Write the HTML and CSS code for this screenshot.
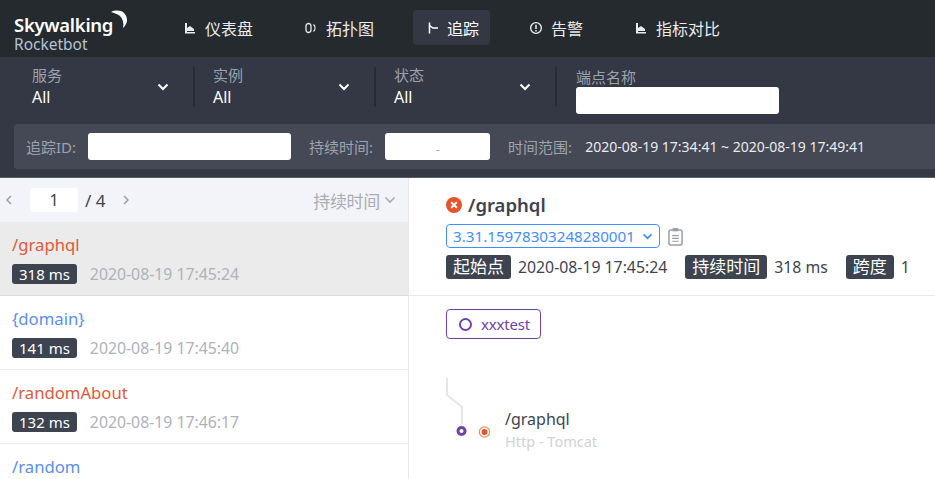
FILE: index.html
```html
<!DOCTYPE html>
<html>
  <head>
    <meta charset="UTF-8"/>
    <title>Skywalking Rocketbot</title>
    <link rel="stylesheet" href="styles.css">
  </head>
  <body>
    <header class="topbar">
      <div class="logo">
        <div class="logo-name">Skywalking<svg class="logo-moon" viewBox="0 0 17 20" width="17" height="20"><path d="M0 2 C4 0 10 0 13 3 C16 6 17 11 15 14 C14 16 13 17 12 18 C13 13 12 9 9 6 C7 4 3 3 0 2 Z" fill="#fff"/></svg></div>
        <div class="logo-sub">Rocketbot</div>
      </div>
      <nav class="nav">
        <a class="nav-item nav-first"><svg class="nav-icon" viewBox="0 0 12 12"><path d="M1 1 H3 V6 L6 4 L10 7 V9 H3 V10 H11 V11.5 H1 Z" fill="currentColor"/></svg>仪表盘</a>
        <a class="nav-item nav-topo"><svg class="nav-icon" viewBox="0 0 12 12"><rect x="1" y="1.5" width="5" height="9" rx="2.4" fill="none" stroke="currentColor" stroke-width="1.3"/><path d="M8.5 2.5 C10.5 4.5 10.5 7.5 8.5 9.5" fill="none" stroke="currentColor" stroke-width="1.3"/></svg>拓扑图</a>
        <a class="nav-item nav-trace active"><svg class="nav-icon" viewBox="0 0 12 12"><path d="M2.5 .5 V11.5 M2.5 3.5 L6 6 H11" fill="none" stroke="currentColor" stroke-width="1.5"/></svg>追踪</a>
        <a class="nav-item nav-alarm"><svg class="nav-icon" viewBox="0 0 12 12"><circle cx="6" cy="6" r="4.6" fill="none" stroke="currentColor" stroke-width="1.2"/><path d="M6 3.2 V6.8 M6 7.8 V9" stroke="currentColor" stroke-width="1.3"/></svg>告警</a>
        <a class="nav-item"><svg class="nav-icon" viewBox="0 0 12 12"><path d="M1 1 H3 V6 L6 4 L10 7 V9 H3 V10 H11 V11.5 H1 Z" fill="currentColor"/></svg>指标对比</a>
      </nav>
    </header>

    <section class="filters">
      <div class="filter-row">
        <div class="filter">
          <div class="filter-text"><span class="filter-label">服务</span><span class="filter-value">All</span></div>
          <svg class="chevron" viewBox="0 0 12 8" width="12" height="8"><path d="M1.5 1.5 L6 6 L10.5 1.5" fill="none" stroke="#fff" stroke-width="2"/></svg>
        </div>
        <div class="filter">
          <div class="filter-text"><span class="filter-label">实例</span><span class="filter-value">All</span></div>
          <svg class="chevron" viewBox="0 0 12 8" width="12" height="8"><path d="M1.5 1.5 L6 6 L10.5 1.5" fill="none" stroke="#fff" stroke-width="2"/></svg>
        </div>
        <div class="filter">
          <div class="filter-text"><span class="filter-label">状态</span><span class="filter-value">All</span></div>
          <svg class="chevron" viewBox="0 0 12 8" width="12" height="8"><path d="M1.5 1.5 L6 6 L10.5 1.5" fill="none" stroke="#fff" stroke-width="2"/></svg>
        </div>
        <div class="filter filter-endpoint">
          <span class="filter-label">端点名称</span>
          <input class="field field-endpoint" type="text">
        </div>
      </div>
      <div class="search-row">
        <span class="search-label">追踪ID:</span>
        <input class="field field-id" type="text">
        <span class="search-label label-duration">持续时间:</span>
        <div class="field field-duration">-</div>
        <span class="search-label label-range">时间范围:</span>
        <span class="range">2020-08-19 17:34:41 ~ 2020-08-19 17:49:41</span>
      </div>
    </section>

    <main class="content">
      <aside class="trace-list">
        <div class="pager">
          <svg class="pager-arrow" viewBox="0 0 8 12" width="8" height="12"><path d="M6 2 L2 6 L6 10" fill="none" stroke="#9aa0a8" stroke-width="1.5"/></svg>
          <div class="page-input">1</div>
          <span class="page-total">/ 4</span>
          <svg class="pager-arrow" viewBox="0 0 8 12" width="8" height="12"><path d="M2 2 L6 6 L2 10" fill="none" stroke="#9aa0a8" stroke-width="1.5"/></svg>
          <span class="sort">持续时间<svg viewBox="0 0 12 8" width="12" height="8"><path d="M1.5 1.5 L6 6 L10.5 1.5" fill="none" stroke="#a9adb3" stroke-width="1.6"/></svg></span>
        </div>
        <div class="trace selected">
          <div class="trace-name error">/graphql</div>
          <div class="trace-meta"><span class="tag">318 ms</span><span class="trace-time">2020-08-19 17:45:24</span></div>
        </div>
        <div class="trace">
          <div class="trace-name ok">{domain}</div>
          <div class="trace-meta"><span class="tag">141 ms</span><span class="trace-time">2020-08-19 17:45:40</span></div>
        </div>
        <div class="trace">
          <div class="trace-name error">/randomAbout</div>
          <div class="trace-meta"><span class="tag">132 ms</span><span class="trace-time">2020-08-19 17:46:17</span></div>
        </div>
        <div class="trace">
          <div class="trace-name ok">/random</div>
        </div>
      </aside>

      <section class="detail">
        <div class="detail-head">
          <h2 class="detail-title"><svg viewBox="0 0 16 16" width="16" height="16"><circle cx="8" cy="8" r="8" fill="#e5542b"/><path d="M5.2 5.2 L10.8 10.8 M10.8 5.2 L5.2 10.8" stroke="#fff" stroke-width="2"/></svg>/graphql</h2>
          <div class="id-row">
            <div class="id-select">3.31.15978303248280001<svg viewBox="0 0 12 8" width="11" height="7"><path d="M1.5 1.5 L6 6 L10.5 1.5" fill="none" stroke="#448dfe" stroke-width="2"/></svg></div>
            <svg class="clip" viewBox="0 0 16 20" width="15" height="19"><rect x="1" y="3" width="14" height="16" rx="2" fill="none" stroke="#9a9fa5" stroke-width="1.6"/><rect x="5" y="1" width="6" height="3.5" fill="#9a9fa5"/><path d="M4.5 9 H11.5 M4.5 12 H11.5 M4.5 15 H11.5" stroke="#9a9fa5" stroke-width="1.2"/></svg>
          </div>
          <div class="info-row">
            <span class="tag tag-cjk">起始点</span><span class="info-value">2020-08-19 17:45:24</span>
            <span class="tag tag-cjk">持续时间</span><span class="info-value">318 ms</span>
            <span class="tag tag-cjk">跨度</span><span class="info-value">1</span>
          </div>
        </div>
        <div class="detail-body">
          <div class="service-tag"><span class="service-dot"></span>xxxtest</div>
          <div class="span-row">
            <svg class="span-tree" viewBox="0 0 50 64" width="50" height="64">
              <path d="M1 1 V18 L16 30 V47" fill="none" stroke="#e6e6e6" stroke-width="2"/>
              <circle cx="15.5" cy="54" r="3.5" fill="#fff" stroke="#6f42a8" stroke-width="3"/>
              <circle cx="38.5" cy="55" r="5.2" fill="#fff" stroke="#ee8a66" stroke-width="1.2"/>
              <circle cx="38.5" cy="55" r="3" fill="#e5542b"/>
            </svg>
            <div class="span-text">
              <div class="span-name">/graphql</div>
              <div class="span-type">Http - Tomcat</div>
            </div>
          </div>
        </div>
      </section>
    </main>
  </body>
</html>
```

FILE: styles.css
```css
html, body { padding: 0; margin: 0; }
body {
    width: 935px;
    height: 479px;
    overflow: hidden;
    background: #fff;
    font-family: "Noto Sans", "Noto Sans CJK SC", sans-serif;
    font-size: 14px;
    color: #3d444f;
}

/* top bar */
.topbar {
    display: flex;
    height: 57px;
    background: #252a2f;
    color: #e9ebee;
}
.logo { box-sizing: border-box; width: 170px; padding: 13px 0 0 14px; }
.logo-name {
    display: flex;
    height: 23px;
    font-size: 18.5px;
    line-height: 23px;
    font-weight: 600;
    letter-spacing: -.3px;
    color: #fff;
}
.logo-moon { margin: -3px 0 0 -2px; }
.logo-sub { font-size: 15.5px; line-height: 17px; color: #b4c2d6; }
.nav { display: flex; padding-top: 10px; }
.nav-item {
    display: flex;
    align-items: center;
    height: 35px;
    padding: 0 13px;
    border-radius: 4px;
    font-size: 16px;
}
.nav-icon { width: 12px; height: 12px; margin-right: 9px; }
.nav-first { margin-left: 1px; }
.nav-topo { margin-left: 26px; }
.nav-trace { margin-left: 26px; padding: 0 11px 0 14px; }
.nav-trace .nav-icon { margin-right: 8px; }
.nav-alarm { margin-left: 26px; }
.nav-alarm .nav-icon { width: 14px; height: 14px; margin-right: 8px; }
.nav-alarm + .nav-item { margin-left: 26px; }
.active { background: #333844; color: #fff; }

/* filters */
.filters { height: 121px; background: #333844; box-sizing: border-box; padding: 10px 0 9px; border-bottom: 1px solid #5a5d66; }
.filter-row { display: flex; height: 57px; padding-left: 14px; }
.filter {
    display: flex;
    align-items: center;
    justify-content: space-between;
    box-sizing: border-box;
    width: 181px;
    height: 40px;
    padding: 0 24px 0 18px;
    border-right: 2px solid #272b33;
}
.filter-text { display: flex; flex-direction: column; }
.filter-label { font-size: 15px; line-height: 17px; color: #9da3ae; }
.filter-value { margin-top: 3px; font-size: 16px; line-height: 20px; color: #fff; }
.filter-endpoint {
    display: block;
    width: 240px;
    height: auto;
    padding: 0 0 0 19px;
    border: 0;
}
.filter-endpoint .filter-label { display: block; line-height: 20px; }
.field {
    display: block;
    box-sizing: border-box;
    height: 27px;
    padding: 0;
    border: 0;
    border-radius: 3px;
    background: #fff;
}
.field-endpoint { width: 203px; }
.search-row {
    display: flex;
    align-items: center;
    height: 45px;
    margin-left: 14px;
    padding-left: 12px;
    background: #454855;
    border-radius: 3px 0 0 3px;
}
.search-label { font-size: 15px; color: #9da3ae; }
.field-id { width: 203px; margin-left: 12px; }
.label-duration { margin-left: 18px; }
.field-duration {
    width: 105px;
    margin-left: 12px;
    color: #9aa;
    font-size: 12px;
    line-height: 33px;
    text-align: center;
}
.label-range { margin-left: 18px; }
.range { margin-left: 13px; font-size: 14px; color: #e9ebee; }

/* trace list */
.content { display: flex; height: 301px; overflow: hidden; }
.trace-list { flex: none; box-sizing: border-box; width: 409px; border-right: 1px solid #e8e8e8; }
.pager {
    display: flex;
    align-items: center;
    height: 44px;
    padding: 0 12px 0 5px;
    background: #f2f4f9;
}
.page-input {
    width: 48px;
    height: 24px;
    margin-left: 17px;
    border-radius: 3px;
    background: #fff;
    font-size: 16px;
    line-height: 24px;
    text-align: center;
}
.page-total { margin: 0 17px 0 7px; font-size: 17px; }
.sort {
    display: flex;
    align-items: center;
    gap: 4px;
    margin-left: auto;
    font-size: 17px;
    letter-spacing: -.3px;
    color: #a9adb3;
}
.trace {
    box-sizing: border-box;
    height: 74px;
    padding: 12px 12px 0;
    border-bottom: 1px solid #ececec;
}
.selected { background: #ebebeb; border-bottom-color: #dcdcdc; }
.trace-name { font-size: 16.7px; line-height: 22px; }
.error { color: #e0593a; }
.ok { color: #5a8fee; }
.trace-meta { display: flex; align-items: center; margin-top: 7px; }
.tag {
    display: inline-block;
    height: 20px;
    padding: 0 7px;
    border-radius: 3px;
    background: #3d444f;
    font-size: 15px;
    line-height: 20px;
    color: #fff;
    white-space: nowrap;
}
.trace-time { margin-left: 13px; font-size: 15.8px; color: #aeb2b9; }

/* detail */
.detail { flex: 1; }
.detail-head { box-sizing: border-box; height: 118px; padding: 15px 0 0 37px; border-bottom: 1px solid #e8e8e8; }
.detail-title {
    display: flex;
    align-items: center;
    gap: 6px;
    margin: 0;
    font-size: 18.5px;
    line-height: 24px;
    font-weight: 600;
}
.id-row { display: flex; align-items: center; margin-top: 7px; }
.id-select {
    display: flex;
    align-items: center;
    justify-content: space-between;
    box-sizing: border-box;
    width: 214px;
    height: 24px;
    padding: 0 6px;
    border: 1px solid #448dfe;
    border-radius: 4px;
    font-size: 15.2px;
    color: #448dfe;
}
.clip { margin-left: 8px; }
.info-row { display: flex; align-items: center; margin-top: 7px; }
.tag-cjk { height: 24px; font-size: 17px; line-height: 24px; padding: 0 7px; }
.info-value { margin: 0 18px 0 7px; font-size: 15.8px; white-space: nowrap; }
.detail-body { padding: 13px 0 0 37px; }
.service-tag {
    display: inline-flex;
    align-items: center;
    box-sizing: border-box;
    height: 30px;
    padding: 0 10px 0 12px;
    border: 1px solid #6f42a8;
    border-radius: 4px;
    font-size: 15px;
    letter-spacing: -.2px;
    color: #6f42a8;
}
.service-dot {
    box-sizing: border-box;
    width: 13px;
    height: 13px;
    margin-right: 9px;
    border: 2px solid #6f42a8;
    border-radius: 50%;
}
.span-row { display: flex; margin-top: 38px; }
.span-tree { flex: none; }
.span-text { margin: 30px 0 0 9px; }
.span-name { font-size: 16px; line-height: 24px; }
.span-type { font-size: 14.5px; line-height: 20px; color: #d0d2d6; }
```
